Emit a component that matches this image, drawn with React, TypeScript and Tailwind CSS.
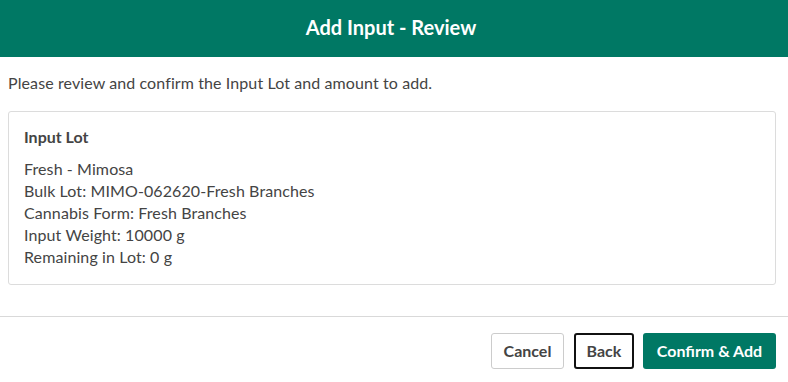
export default function App() {
  const lines = [
    'Fresh - Mimosa',
    'Bulk Lot: MIMO-062620-Fresh Branches',
    'Cannabis Form: Fresh Branches',
    'Input Weight: 10000 g',
    'Remaining in Lot: 0 g',
  ]

  return (
    <div className="w-[788px] h-[382px] bg-white font-['Lato',sans-serif] text-[#444]">
      <header className="h-[57px] bg-[#007864] flex items-center justify-center pb-[3px] pr-[6px]">
        <h1 className="text-white text-[20px] font-bold">Add Input - Review</h1>
      </header>

      <div className="px-2 pt-[15px]">
        <p className="text-[16px] leading-[22px] tracking-[0.1px]">
          Please review and confirm the Input Lot and amount to add.
        </p>

        <div className="mt-[17px] w-[768px] h-[174px] border border-[#dcdcdc] rounded-[3px] px-[15px] pt-[14px]">
          <h2 className="text-[16px] font-bold leading-[22px]">Input Lot</h2>
          <div className="mt-[10px] tracking-[0.1px]">
            {lines.map((line) => (
              <div key={line} className="text-[16px] leading-[22px]">
                {line}
              </div>
            ))}
          </div>
        </div>
      </div>

      <div className="mt-[31px] border-t border-[#d9d9d9]" />

      <div className="flex justify-end gap-[9px] pr-[12px] pt-[16px]">
        <button
          type="button"
          className="h-[36px] w-[73px] rounded-[3px] border border-[#cccccc] bg-white text-[16px] font-bold text-[#444]"
        >
          Cancel
        </button>
        <button
          type="button"
          className="ml-[1px] h-[36px] w-[60px] rounded-[3px] border-2 border-[#111] bg-white text-[16px] font-bold text-[#444]"
        >
          Back
        </button>
        <button
          type="button"
          className="h-[36px] w-[133px] rounded-[3px] bg-[#007864] text-[16px] font-bold text-white"
        >
          Confirm &amp; Add
        </button>
      </div>
    </div>
  )
}
